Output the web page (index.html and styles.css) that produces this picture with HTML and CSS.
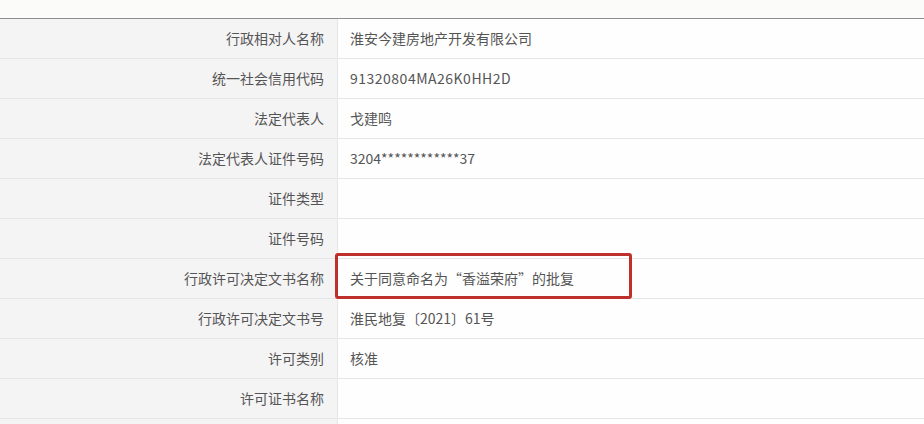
FILE: index.html
```html
<!DOCTYPE html>
<html>
<head>
  <meta charset="utf-8">
  <title>行政许可信息</title>
  <link rel="stylesheet" href="styles.css">
</head>
<body>
  <div class="page">
    <div class="info">
      <div class="row"><div class="label">行政相对人名称</div><div class="value">淮安今建房地产开发有限公司</div></div>
      <div class="row"><div class="label">统一社会信用代码</div><div class="value code">91320804MA26K0HH2D</div></div>
      <div class="row"><div class="label">法定代表人</div><div class="value">戈建鸣</div></div>
      <div class="row"><div class="label">法定代表人证件号码</div><div class="value">3204************37</div></div>
      <div class="row"><div class="label">证件类型</div><div class="value"></div></div>
      <div class="row"><div class="label">证件号码</div><div class="value"></div></div>
      <div class="row"><div class="label">行政许可决定文书名称</div><div class="value marked">关于同意命名为“香溢荣府”的批复<span class="mark"></span></div></div>
      <div class="row"><div class="label">行政许可决定文书号</div><div class="value">淮民地复〔2021〕61号</div></div>
      <div class="row"><div class="label">许可类别</div><div class="value">核准</div></div>
      <div class="row"><div class="label">许可证书名称</div><div class="value"></div></div>
      <div class="row"><div class="label"></div><div class="value"></div></div>
    </div>
  </div>
</body>
</html>
```

FILE: styles.css
```css
*{
  margin: 0;
  padding: 0;
  box-sizing: border-box;
}
body
{
  background: #fbfbf9;
  font-family: "Microsoft YaHei", "Noto Sans CJK SC", sans-serif;
  font-size: 14px;
  color: #555;
  overflow: hidden;
}
.page
{
  padding-top: 18px;
}
.info
{
  border-top: 1px solid #8e8e8e;
  background: #fff;
}
.row
{
  display: flex;
  height: 40px;
  border-bottom: 1px solid #e6e6e6;
}
.label
{
  width: 338px;
  flex: none;
  background: #f5f4f5;
  border-right: 1px solid #e6e6e6;
  display: flex;
  align-items: center;
  justify-content: flex-end;
  padding: 0 13px 2px 0;
}
.value
{
  flex: 1;
  display: flex;
  align-items: center;
  padding: 0 0 2px 12px;
  background: #fefefe;
}
.code
{
  letter-spacing: 0.5px;
}
.marked
{
  position: relative;
}
.mark
{
  position: absolute;
  left: -3px;
  top: -6px;
  width: 297px;
  height: 46px;
  border: 3px solid #bf2f2c;
  border-radius: 3px;
}
```
